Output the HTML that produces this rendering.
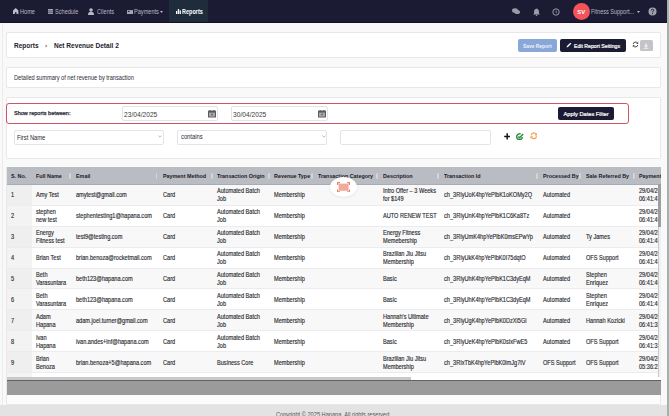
<!DOCTYPE html>
<html><head><meta charset="utf-8">
<style>
*{box-sizing:border-box;margin:0;padding:0}
html,body{width:670px;height:416px;overflow:hidden}
body{background:#f9f9f9;font-family:"Liberation Sans",sans-serif;color:#2a2a35;position:relative}
.abs{position:absolute}
.nav{position:absolute;left:0;top:0;width:667px;height:22.6px;background:#1c1b34;border-bottom:1px solid #121126}
.ni{position:absolute;top:0.9px;height:22px;line-height:22px;font-size:5.6px;color:#b9b9c6;white-space:nowrap}
.ni svg{position:absolute;top:8px}
.card{position:absolute;left:6px;width:655px;background:#fff;border:1px solid #e8e8eb;border-radius:1px}
.t{position:absolute;white-space:nowrap;line-height:1}
.btn{position:absolute;border-radius:2px;color:#fff;font-size:4.9px;font-weight:bold;text-align:center;white-space:nowrap}
.inp{position:absolute;background:#fff;border:1px solid #e3e3e8;border-radius:2px;font-size:5.8px;color:#333}
table{position:absolute;left:6.5px;top:167.3px;width:687.1px;border-collapse:collapse;table-layout:fixed;font-size:5.6px;color:#2c2c33}
td,th{padding:0 0 0 5px;text-align:left;vertical-align:middle;overflow:hidden;white-space:nowrap;line-height:8px}
th{height:17.3px;background:#babcc3;border-bottom:1px solid #a8acb4;font-weight:bold;font-size:5.4px;color:#1a1a22;padding-top:0.8px;position:relative}
td{height:20.95px;border-top:1px solid #ececef;padding-top:1.3px;-webkit-text-stroke:0.15px #2c2c33}
tr.o td{background:#f8f8f8}
tr.e td{background:#fff}
tr.o td.c0{background:#efefef}
tr.e td.c0{background:#f3f3f4}
td:nth-child(2),th:nth-child(2){padding-left:4px}
td.c0,th:first-child{padding-left:4.6px}
td i,th i{display:inline-block;font-style:normal;transform:scaleX(0.875);transform-origin:0 50%}
td{font-size:6.4px}
th{font-size:6.17px}
</style></head><body>

<!-- NAVBAR -->
<div class="nav">
  <div class="abs" style="left:169px;top:0;width:39px;height:22px;background:#1e2c3c"></div>
  <div class="ni" style="left:20.1px;font-size:6.40px;transform:scaleX(0.875);transform-origin:0 50%">Home</div>
  <svg class="abs" style="left:13.2px;top:8px" width="5.4" height="6.4" viewBox="0 0 5.4 6.4"><path d="M2.7 0 L5.4 2.6 L5.4 6.4 L3.5 6.4 L3.5 4.2 L1.9 4.2 L1.9 6.4 L0 6.4 L0 2.6 Z" fill="#bdbdca"/></svg>
  <div class="ni" style="left:55px;font-size:6.40px;transform:scaleX(0.875);transform-origin:0 50%">Schedule</div>
  <svg class="abs" style="left:47.6px;top:8.5px" width="5.5" height="5.5" viewBox="0 0 6 6"><rect x="0" y="0" width="6" height="6" fill="#a5a5b3"/><path d="M0 2h6M0 4h6" stroke="#1c1b34" stroke-width="0.6"/></svg>
  <div class="ni" style="left:96.7px;font-size:6.40px;transform:scaleX(0.875);transform-origin:0 50%">Clients</div>
  <svg class="abs" style="left:87.5px;top:8.3px" width="6" height="7" viewBox="0 0 6 7"><circle cx="3" cy="2" r="1.8" fill="#b9b9c6"/><path d="M0 7 Q0 3.8 3 3.8 Q6 3.8 6 7Z" fill="#b9b9c6"/></svg>
  <div class="ni" style="left:134px;font-size:6.40px;transform:scaleX(0.875);transform-origin:0 50%">Payments</div>
  <svg class="abs" style="left:126.5px;top:9.5px" width="6" height="4.5" viewBox="0 0 7 5"><rect x="0" y="0" width="7" height="5" fill="#a5a5b3"/><rect x="1" y="1" width="2" height="1.2" fill="#1c1b34"/></svg>
  <svg class="abs" style="left:160px;top:11.3px" width="3" height="2" viewBox="0 0 3 2"><path d="M0 0H3L1.5 2Z" fill="#b9b9c6"/></svg>
  <div class="ni" style="left:182px;color:#fff;font-weight:bold;font-size:6.29px;transform:scaleX(0.875);transform-origin:0 50%">Reports</div>
  <svg class="abs" style="left:175.8px;top:9.3px" width="5" height="5" viewBox="0 0 5 5"><rect x="0" y="2" width="1.3" height="3" fill="#fff"/><rect x="1.8" y="0" width="1.3" height="5" fill="#fff"/><rect x="3.6" y="1.4" width="1.3" height="3.6" fill="#fff"/></svg>

  <!-- right icons -->
  <svg class="abs" style="left:512px;top:8px" width="8" height="7" viewBox="0 0 8 7"><ellipse cx="3" cy="2.5" rx="3" ry="2.3" fill="#9a9aa8"/><ellipse cx="5.2" cy="4" rx="2.8" ry="2.1" fill="#9a9aa8"/></svg>
  <svg class="abs" style="left:533px;top:7.5px" width="7" height="8" viewBox="0 0 7 8"><path d="M3.5 0.5 Q6 0.8 6 3.5 L6 5.5 L7 6.5 L0 6.5 L1 5.5 L1 3.5 Q1 0.8 3.5 0.5Z" fill="#9a9aa8"/><circle cx="3.5" cy="7.2" r="0.8" fill="#9a9aa8"/></svg>
  <svg class="abs" style="left:552px;top:7.5px" width="8" height="8" viewBox="0 0 8 8"><circle cx="4" cy="4" r="3.2" fill="none" stroke="#9a9aa8" stroke-width="1"/><path d="M4 2.4V4.3L5.2 5" stroke="#9a9aa8" stroke-width="0.8" fill="none"/></svg>
  <div class="abs" style="left:572.7px;top:2.8px;width:17px;height:17px;border-radius:50%;background:#f4535a;color:#fff;font-size:5.8px;font-weight:bold;line-height:18.6px;text-align:center">SV</div>
  <div class="ni" style="left:591px;font-size:6.29px;transform:scaleX(0.875);transform-origin:0 50%">Fitness Support...</div>
  <svg class="abs" style="left:637px;top:10.5px" width="3" height="2" viewBox="0 0 3 2"><path d="M0 0H3L1.5 2Z" fill="#b9b9c6"/></svg>
  <svg class="abs" style="left:647.5px;top:7px" width="9" height="9" viewBox="0 0 9 9"><circle cx="4.5" cy="4.5" r="4" fill="#a0a0ad"/><path d="M3.2 3.5 Q3.2 2.2 4.5 2.2 Q5.8 2.2 5.8 3.4 Q5.8 4.2 4.6 4.6 L4.6 5.4" stroke="#1c1b34" stroke-width="0.9" fill="none"/><circle cx="4.6" cy="6.6" r="0.55" fill="#1c1b34"/></svg>
</div>

<div class="abs" style="left:2px;top:23px;width:1px;height:382px;background:#ececed"></div>
<!-- page right scrollbar -->
<div class="abs" style="left:666.8px;top:0;width:3.2px;height:416px;background:#d9d9da;border-left:2.4px solid #adadaf"></div>

<!-- CARD 1 breadcrumbs -->
<div class="card" style="top:32px;height:26.4px">
  <div class="t" style="left:6.6px;top:8.7px;font-size:7.43px;font-weight:bold;color:#22222c;transform:scaleX(0.875);transform-origin:0 50%">Reports</div>
  <svg class="abs" style="left:37.5px;top:10.7px" width="3" height="4" viewBox="0 0 3 4"><path d="M0.6 0.6 L2.4 2 L0.6 3.4Z" fill="#777"/></svg>
  <div class="t" style="left:46.7px;top:8.7px;font-size:7.49px;font-weight:bold;color:#22222c;transform:scaleX(0.875);transform-origin:0 50%">Net Revenue Detail 2</div>
  <div class="btn" style="left:511px;top:5.7px;width:39.3px;height:13.1px;line-height:14.3px;background:#8aa7da;color:#eef2fa;font-weight:bold;font-size:5.6px"><i style="display:inline-block;font-style:normal;transform:scaleX(0.875);transform-origin:50% 50%">Save Report</i></div>
  <div class="btn" style="left:552.7px;top:6px;width:66px;height:12.8px;line-height:12.8px;background:#1c1b34;font-size:5.54px;font-weight:normal;-webkit-text-stroke:0.22px #fff;padding-left:14.2px;padding-top:1.3px;text-align:left"><i style="display:inline-block;font-style:normal;transform:scaleX(0.935);transform-origin:0 50%">Edit Report Settings</i></div>
  <svg class="abs" style="left:558.5px;top:8.8px" width="6" height="6" viewBox="0 0 6 6"><path d="M0.6 5.4 L1 4 L4.3 0.7 L5.3 1.7 L2 5Z" fill="#fff"/></svg>
  <svg class="abs" style="left:624.8px;top:8.1px" width="7" height="7" viewBox="0 0 7 7"><path d="M1.2 3 A2.4 2.4 0 0 1 5.6 2.2" stroke="#333" stroke-width="0.9" fill="none"/><path d="M5.8 4 A2.4 2.4 0 0 1 1.4 4.8" stroke="#333" stroke-width="0.9" fill="none"/><path d="M6.2 0.8 L6.2 2.8 L4.2 2.8Z" fill="#333"/><path d="M0.8 6.2 L0.8 4.2 L2.8 4.2Z" fill="#333"/></svg>
  <div class="abs" style="left:632.5px;top:7.2px;width:13.5px;height:11.2px;background:#c3c4c8;border-radius:1.5px"></div>
  <svg class="abs" style="left:636.3px;top:9.8px" width="6" height="6" viewBox="0 0 6 6"><path d="M2.2 0.5H3.8V2.8H5.2L3 5L0.8 2.8H2.2Z" fill="#eee"/><rect x="0.5" y="5.2" width="5" height="0.8" fill="#eee"/></svg>
</div>

<!-- CARD 2 description -->
<div class="card" style="top:66.6px;height:21.9px">
  <div class="t" style="left:6.6px;top:7.5px;font-size:6.46px;color:#2a2a33;transform:scaleX(0.875);transform-origin:0 50%">Detailed summary of net revenue by transaction</div>
</div>

<!-- CARD 3 filters -->
<div class="card" style="top:97px;height:61.9px">
  <div class="abs" style="left:-1.3px;top:4.6px;width:623.5px;height:21.2px;border:1.3px solid #cf5468;border-radius:3px"></div>
  <div class="t" style="left:6.6px;top:12.63px;font-size:5.94px;font-weight:normal;-webkit-text-stroke:0.25px #23232c;color:#23232c;transform:scaleX(0.93);transform-origin:0 50%">Show reports between:</div>
  <div class="inp" style="left:114.7px;top:8.1px;width:96.5px;height:14.6px">
    <div class="t" style="left:1.3px;top:4.0px;font-size:7.4px;color:#3a3a40;transform:scaleX(0.9);transform-origin:0 50%">23/04/2025</div>
    <svg class="abs" style="left:85.6px;top:3.4px" width="8" height="7.6" viewBox="0 0 8 7.6"><rect x="0" y="0.6" width="8" height="7" rx="0.6" fill="#5a5a5e"/><rect x="1" y="2.6" width="6" height="4" fill="#a9a9ad"/><rect x="1.6" y="0" width="1" height="1.4" fill="#5a5a5e"/><rect x="5.4" y="0" width="1" height="1.4" fill="#5a5a5e"/><rect x="3.3" y="3.8" width="1.6" height="1.4" fill="#5a5a5e"/></svg>
  </div>
  <div class="inp" style="left:223.7px;top:8.1px;width:97px;height:14.6px">
    <div class="t" style="left:1.3px;top:4.0px;font-size:7.4px;color:#3a3a40;transform:scaleX(0.9);transform-origin:0 50%">30/04/2025</div>
    <svg class="abs" style="left:86.1px;top:3.4px" width="8" height="7.6" viewBox="0 0 8 7.6"><rect x="0" y="0.6" width="8" height="7" rx="0.6" fill="#5a5a5e"/><rect x="1" y="2.6" width="6" height="4" fill="#a9a9ad"/><rect x="1.6" y="0" width="1" height="1.4" fill="#5a5a5e"/><rect x="5.4" y="0" width="1" height="1.4" fill="#5a5a5e"/><rect x="3.3" y="3.8" width="1.6" height="1.4" fill="#5a5a5e"/></svg>
  </div>
  <div class="btn" style="left:551.3px;top:8.6px;width:56px;height:13.4px;line-height:13.4px;padding-top:0.7px;background:#1c1b34;font-size:6.1px;font-weight:normal;-webkit-text-stroke:0.22px #fff"><i style="display:inline-block;font-style:normal;transform:scaleX(0.935);transform-origin:50% 50%">Apply Dates Filter</i></div>

  <div class="inp" style="left:6.6px;top:31.6px;width:150px;height:15px">
    <div class="t" style="left:2.5px;top:4.09px;font-size:6.63px;color:#2a2a33;transform:scaleX(0.875);transform-origin:0 50%">First Name</div>
    <svg class="abs" style="left:143.4px;top:4.4px" width="4" height="3" viewBox="0 0 4 3"><path d="M0.4 0.6 L2 2.2 L3.6 0.6" stroke="#888" stroke-width="0.6" fill="none"/></svg>
  </div>
  <div class="inp" style="left:169.8px;top:31.6px;width:150.3px;height:15px">
    <div class="t" style="left:3px;top:3.59px;font-size:6.63px;color:#2a2a33;transform:scaleX(0.875);transform-origin:0 50%">contains</div>
    <svg class="abs" style="left:144.4px;top:4.4px" width="4" height="3" viewBox="0 0 4 3"><path d="M0.4 0.6 L2 2.2 L3.6 0.6" stroke="#888" stroke-width="0.6" fill="none"/></svg>
  </div>
  <div class="inp" style="left:333px;top:31.8px;width:151px;height:15px"></div>
  <svg class="abs" style="left:496.6px;top:34.8px" width="6.4" height="6.8" viewBox="0 0 6.4 6.8"><path d="M3.2 0.3V6.5M0.2 3.4H6.2" stroke="#161616" stroke-width="1.5"/></svg>
  <svg class="abs" style="left:508.8px;top:34.6px" width="8" height="7.2" viewBox="0 0 8 7.2"><path d="M6.4 4.2 A2.9 2.9 0 1 1 4.6 1" stroke="#2f8c3f" stroke-width="1.5" fill="none"/><path d="M2.2 3.4 L3.6 4.8 L7.2 1" stroke="#2f8c3f" stroke-width="1.4" fill="none"/></svg>
  <svg class="abs" style="left:522.6px;top:34.2px" width="7.6" height="7.6" viewBox="0 0 7.6 7.6"><path d="M1.2 3.4 A2.6 2.6 0 0 1 6 2.2" stroke="#f2a252" stroke-width="1.3" fill="none"/><path d="M6.4 4.2 A2.6 2.6 0 0 1 1.6 5.4" stroke="#f2a252" stroke-width="1.3" fill="none"/><path d="M7.3 0.6 L7.3 3.4 L4.5 3.4Z" fill="#f2a252"/><path d="M0.3 7 L0.3 4.2 L3.1 4.2Z" fill="#f2a252"/></svg>
</div>

<!-- CARD 4 table -->
<div class="card" style="top:166.5px;height:238.5px;border-top:none;background:#fcfcfc"></div>
<div class="abs" style="left:6.5px;top:167px;width:654px;height:211px;overflow:hidden">
<table style="left:0;top:0">
<colgroup><col style="width:25.5px"><col style="width:39px"><col style="width:87px"><col style="width:53.5px"><col style="width:57px"><col style="width:44.5px"><col style="width:64.8px"><col style="width:61.5px"><col style="width:99px"><col style="width:42.7px"><col style="width:52.6px"><col style="width:60px"></colgroup>
<tr><th><i>S. No.</i></th><th><i>Full Name</i></th><th><i>Email</i></th><th><i>Payment Method</i></th><th><i>Transaction Origin</i></th><th><i>Revenue Type</i></th><th><i>Transaction Category</i></th><th><i>Description</i></th><th><i>Transaction Id</i></th><th><i>Processed By</i></th><th><i>Sale Referred By</i></th><th><i>Payment Date</i></th></tr>
<tr class="o"><td class="c0"><i>1</i></td><td><i>Amy Test</i></td><td><i>amytest@gmail.com</i></td><td><i>Card</i></td><td><i>Automated Batch<br>Job</i></td><td><i>Membership</i></td><td></td><td><i>Intro Offer – 3 Weeks<br>for $149</i></td><td><i>ch_3RIyUoK4hpYePlbK1oKOMy2Q</i></td><td><i>Automated</i></td><td></td><td><i>29/04/2025<br>06:41:47</i></td></tr>
<tr class="e"><td class="c0"><i>2</i></td><td><i>stephen<br>new test</i></td><td><i>stephentesting1@hapana.com</i></td><td><i>Card</i></td><td><i>Automated Batch<br>Job</i></td><td><i>Membership</i></td><td></td><td><i>AUTO RENEW TEST</i></td><td><i>ch_3RIyUnK4hpYePlbK1C6Ka8Tz</i></td><td><i>Automated</i></td><td></td><td><i>29/04/2025<br>06:41:46</i></td></tr>
<tr class="o"><td class="c0"><i>3</i></td><td><i>Energy<br>Fitness test</i></td><td><i>test9@testing.com</i></td><td><i>Card</i></td><td><i>Automated Batch<br>Job</i></td><td><i>Membership</i></td><td></td><td><i>Energy Fitness<br>Memebership</i></td><td><i>ch_3RIyUmK4hpYePlbK0msEPwYp</i></td><td><i>Automated</i></td><td><i>Ty James</i></td><td><i>29/04/2025<br>06:41:45</i></td></tr>
<tr class="e"><td class="c0"><i>4</i></td><td><i>Brian Test</i></td><td><i>brian.benoza@rocketmail.com</i></td><td><i>Card</i></td><td><i>Automated Batch<br>Job</i></td><td><i>Membership</i></td><td></td><td><i>Brazilian Jiu Jitsu<br>Membership</i></td><td><i>ch_3RIyUkK4hpYePlbK0I75dqtO</i></td><td><i>Automated</i></td><td><i>OFS Support</i></td><td><i>29/04/2025<br>06:41:43</i></td></tr>
<tr class="o"><td class="c0"><i>5</i></td><td><i>Beth<br>Varasuntara</i></td><td><i>beth123@hapana.com</i></td><td><i>Card</i></td><td><i>Automated Batch<br>Job</i></td><td><i>Membership</i></td><td></td><td><i>Basic</i></td><td><i>ch_3RIyUhK4hpYePlbK1C3dyEqM</i></td><td><i>Automated</i></td><td><i>Stephen<br>Enriquez</i></td><td><i>29/04/2025<br>06:41:40</i></td></tr>
<tr class="e"><td class="c0"><i>6</i></td><td><i>Beth<br>Varasuntara</i></td><td><i>beth123@hapana.com</i></td><td><i>Card</i></td><td><i>Automated Batch<br>Job</i></td><td><i>Membership</i></td><td></td><td><i>Basic</i></td><td><i>ch_3RIyUhK4hpYePlbK1C3dyEqM</i></td><td><i>Automated</i></td><td><i>Stephen<br>Enriquez</i></td><td><i>29/04/2025<br>06:41:40</i></td></tr>
<tr class="o"><td class="c0"><i>7</i></td><td><i>Adam<br>Hapana</i></td><td><i>adam.joel.turner@gmail.com</i></td><td><i>Card</i></td><td><i>Automated Batch<br>Job</i></td><td><i>Membership</i></td><td></td><td><i>Hannah's Ultimate<br>Membership</i></td><td><i>ch_3RIyUgK4hpYePlbK0DzXi5Gl</i></td><td><i>Automated</i></td><td><i>Hannah Kozicki</i></td><td><i>29/04/2025<br>06:41:38</i></td></tr>
<tr class="e"><td class="c0"><i>8</i></td><td><i>Ivan<br>Hapana</i></td><td><i>ivan.andes+inf@hapana.com</i></td><td><i>Card</i></td><td><i>Automated Batch<br>Job</i></td><td><i>Membership</i></td><td></td><td><i>Basic</i></td><td><i>ch_3RIyUeK4hpYePlbK0sIxFwE5</i></td><td><i>Automated</i></td><td><i>OFS Support</i></td><td><i>29/04/2025<br>06:41:37</i></td></tr>
<tr class="o"><td class="c0"><i>9</i></td><td><i>Brian<br>Benoza</i></td><td><i>brian.benoza+5@hapana.com</i></td><td><i>Card</i></td><td><i>Business Core</i></td><td><i>Membership</i></td><td></td><td><i>Brazilian Jiu Jitsu<br>Membership</i></td><td><i>ch_3RIxTbK4hpYePlbK0imJg7tV</i></td><td><i>OFS Support</i></td><td><i>OFS Support</i></td><td><i>29/04/2025<br>05:36:22</i></td></tr>
<tr class="e"><td class="c0"><i>10</i></td><td><i>Brian<br>Benoza</i></td><td><i>brian.benoza@hapana.com</i></td><td><i>Card</i></td><td><i>Business Core</i></td><td><i>Membership</i></td><td></td><td><i>Basic</i></td><td><i>ch_3RIxTbK4hpYePlbK0imJg7tV</i></td><td><i>OFS Support</i></td><td><i>OFS Support</i></td><td><i>29/04/2025<br>05:36:22</i></td></tr>
</table>
</div>
<!-- header separators --><div class="abs" style="left:68.9px;top:172.8px;width:1.9px;height:6px;background:#d2d4d8;border-radius:1px"></div><div class="abs" style="left:155.6px;top:172.8px;width:1.9px;height:6px;background:#d2d4d8;border-radius:1px"></div><div class="abs" style="left:210.7px;top:172.8px;width:1.9px;height:6px;background:#d2d4d8;border-radius:1px"></div><div class="abs" style="left:267.8px;top:172.8px;width:1.9px;height:6px;background:#d2d4d8;border-radius:1px"></div><div class="abs" style="left:311.4px;top:172.8px;width:1.9px;height:6px;background:#d2d4d8;border-radius:1px"></div><div class="abs" style="left:376.0px;top:172.8px;width:1.9px;height:6px;background:#d2d4d8;border-radius:1px"></div><div class="abs" style="left:436.9px;top:172.8px;width:1.9px;height:6px;background:#d2d4d8;border-radius:1px"></div><div class="abs" style="left:535.7px;top:172.8px;width:1.9px;height:6px;background:#d2d4d8;border-radius:1px"></div><div class="abs" style="left:579.2px;top:172.8px;width:1.9px;height:6px;background:#d2d4d8;border-radius:1px"></div><div class="abs" style="left:633.2px;top:172.8px;width:1.9px;height:6px;background:#d2d4d8;border-radius:1px"></div>
<!-- table vertical scrollbar -->
<div class="abs" style="left:658px;top:184px;width:3px;height:194px;background:#f1f1f1;border-left:0.5px solid #c9c9c9"></div>
<div class="abs" style="left:658.2px;top:184.3px;width:2.4px;height:42.5px;background:#9e9ea0"></div>
<!-- horizontal scrollbar -->
<div class="abs" style="left:6.5px;top:376.8px;width:654px;height:3.6px;background:#fff"></div>
<div class="abs" style="left:6.5px;top:377px;width:404px;height:3.4px;background:#c9c9cb"></div>
<div class="abs" style="left:6.5px;top:380px;width:654px;height:1.3px;background:#626264"></div>
<div class="abs" style="left:6.5px;top:381.3px;width:654px;height:13.6px;background:#9b9b9b"></div>

<!-- floating circle -->
<div class="abs" style="left:330px;top:177.3px;width:27px;height:20px;border-radius:50%;background:#fff;box-shadow:0 0.5px 2.5px rgba(0,0,0,0.10)"></div>
<svg class="abs" style="left:336.8px;top:181.6px" width="13.2" height="10.4" viewBox="0 0 13.2 10.4"><rect x="1.6" y="1.6" width="10" height="7.2" fill="#f1ab9a"/><path d="M0.6 3V0.6H3M10.2 0.6H12.6V3M12.6 7.4V9.8H10.2M3 9.8H0.6V7.4" stroke="#e3826f" stroke-width="1.1" fill="none"/></svg>

<!-- FOOTER -->
<div class="abs" style="left:0;top:405px;width:667px;height:11px;background:#e3e3e4"></div>
<div class="t" style="left:275.5px;top:411.90px;font-size:6.46px;color:#555;transform:scaleX(0.875);transform-origin:0 50%">Copyright © 2025 Hapana. All rights reserved.</div>

</body></html>
